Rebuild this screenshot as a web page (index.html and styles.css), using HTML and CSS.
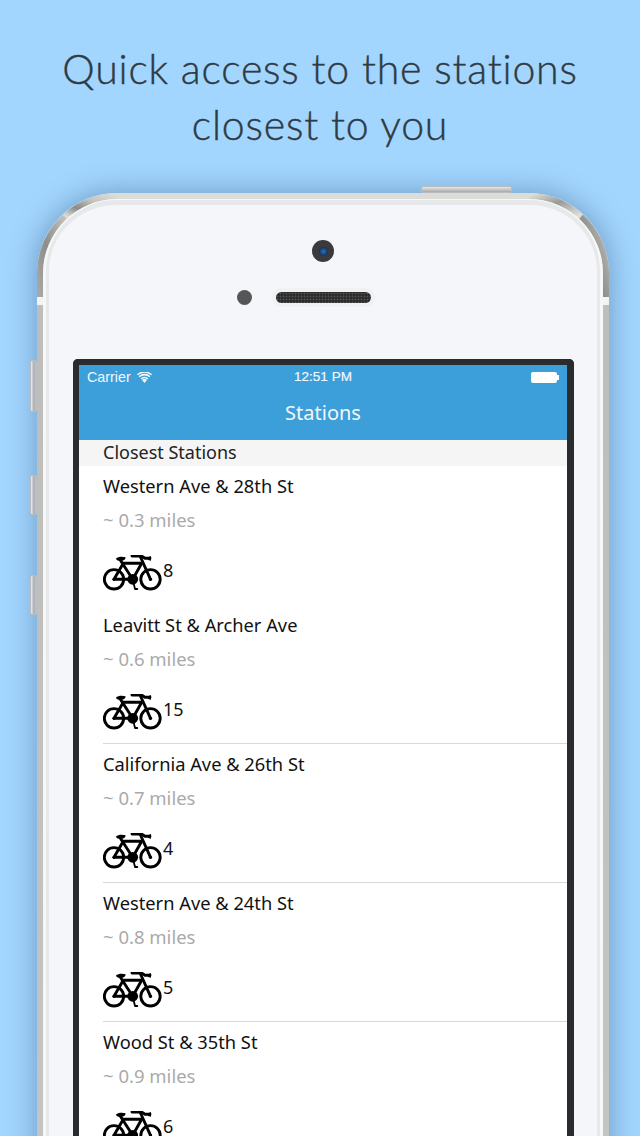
FILE: index.html
```html
<!DOCTYPE html>
<html lang="en">
<head>
<meta charset="utf-8">
<title>Stations</title>
<link rel="stylesheet" href="styles.css">
</head>
<body>
<main class="page">
  <h1 class="headline">Quick access to the stations<br>closest to you</h1>
  <div class="phone">
    <span class="btn btn-top"></span>
    <span class="btn btn-mute"></span>
    <span class="btn btn-up"></span>
    <span class="btn btn-down"></span>
    <svg class="corners" width="572" height="120" viewBox="0 0 572 120">
      <defs>
        <linearGradient id="gl" x1="0" y1="1" x2="1" y2="0"><stop offset="0" stop-color="#a8a8a6"/><stop offset=".45" stop-color="#8d8d8b"/><stop offset="1" stop-color="#c2c2bf"/></linearGradient>
        <linearGradient id="gt" x1="0" y1="1" x2="1" y2="0"><stop offset="0" stop-color="#dcdcda"/><stop offset=".3" stop-color="#8a8a88"/><stop offset=".65" stop-color="#c4c4c1"/><stop offset="1" stop-color="#dcdcd8"/></linearGradient>
        <linearGradient id="gr" x1="1" y1="1" x2="0" y2="0"><stop offset="0" stop-color="#e2e2df"/><stop offset=".55" stop-color="#9a9a97"/><stop offset="1" stop-color="#dcdcd8"/></linearGradient>
      </defs>
      <path class="arc" stroke="url(#gl)" d="M3 104 V80 A77 77 0 0 1 28 24"/>
      <path class="arc" stroke="url(#gt)" d="M29 23 A77 77 0 0 1 80 3"/>
      <path class="arc" stroke="url(#gl)" d="M569 104 V80 A77 77 0 0 0 544 24"/>
      <path class="arc" stroke="url(#gr)" d="M543 23 A77 77 0 0 0 492 3"/>
    </svg>
    <span class="notch notch-l"></span>
    <span class="notch notch-r"></span>
    <div class="lip">
      <div class="face">
        <div class="camera"><span class="lens"></span></div>
        <div class="ear">
          <span class="mic"></span>
          <span class="speaker"></span>
        </div>
        <div class="screen">
          <div class="status">
            <span class="carrier">Carrier
              <svg class="wifi" width="15" height="11" viewBox="0 0 15 11"><path d="M7.5 11 5 8a3.5 3.5 0 0 1 5 0Z"/><path d="M3.6 6.4a5.7 5.7 0 0 1 7.8 0l-1 1.1a4.3 4.3 0 0 0-5.8 0Z"/><path d="M1.6 4.2a8.6 8.6 0 0 1 11.8 0l-1 1.1a7.2 7.2 0 0 0-9.8 0Z"/><path d="M0 2.3a11 11 0 0 1 15 0l-.9 1a9.8 9.8 0 0 0-13.2 0Z"/></svg>
            </span>
            <span class="time">12:51 PM</span>
            <span class="battery"><span class="cell"></span><span class="tip"></span></span>
          </div>
          <div class="navbar">Stations</div>
          <div class="section">Closest Stations</div>
          <ul class="list">
            <li class="row">
              <div class="name">Western Ave &amp; 28th St</div>
              <div class="dist">~ 0.3 miles</div>
              <div class="bikes"><svg class="bike" viewBox="0 0 60 37"><use href="#bike"/></svg><span class="count">8</span></div>
            </li>
            <li class="row">
              <div class="name">Leavitt St &amp; Archer Ave</div>
              <div class="dist">~ 0.6 miles</div>
              <div class="bikes"><svg class="bike" viewBox="0 0 60 37"><use href="#bike"/></svg><span class="count">15</span></div>
            </li>
            <li class="row">
              <div class="name">California Ave &amp; 26th St</div>
              <div class="dist">~ 0.7 miles</div>
              <div class="bikes"><svg class="bike" viewBox="0 0 60 37"><use href="#bike"/></svg><span class="count">4</span></div>
            </li>
            <li class="row">
              <div class="name">Western Ave &amp; 24th St</div>
              <div class="dist">~ 0.8 miles</div>
              <div class="bikes"><svg class="bike" viewBox="0 0 60 37"><use href="#bike"/></svg><span class="count">5</span></div>
            </li>
            <li class="row">
              <div class="name">Wood St &amp; 35th St</div>
              <div class="dist">~ 0.9 miles</div>
              <div class="bikes"><svg class="bike" viewBox="0 0 60 37"><use href="#bike"/></svg><span class="count">6</span></div>
            </li>
          </ul>
        </div>
      </div>
    </div>
  </div>
</main>
<svg class="defs" width="0" height="0">
  <symbol id="bike" viewBox="0 0 60 37">
    <g fill="none" stroke="#000" stroke-width="2.9" stroke-linecap="round" stroke-linejoin="round">
      <circle cx="11" cy="24.3" r="9.7"/>
      <circle cx="47.5" cy="24.3" r="9.7"/>
      <path d="M11 24.3 20.3 8.3 H38.7 L29.7 24.3 Z"/>
      <path d="M17.7 5.7 29.7 24.3"/>
      <path d="M47.5 24.3 37.5 2"/>
      <path d="M29 1 H38.5 L42 3.3 H47"/>
      <path d="M29.7 24.3 32 34 H34.3" stroke-width="1.8"/>
    </g>
    <path d="M13 3.5 C15 1.2 20 1.4 22.5 2.2 C23 4.5 20 5.9 17 5.9 C15 5.9 13 5 13 3.5Z"/>
    <path d="M45 2.2 48 .9 48 5.8 45 5Z"/>
    <circle cx="29.7" cy="24.3" r="5.4"/>
    <circle cx="11" cy="24.3" r="1.6"/>
    <circle cx="47.5" cy="24.3" r="1.6"/>
  </symbol>
</svg>
</body>
</html>
```
FILE: styles.css
```css
* { box-sizing: border-box; }
html, body { margin: 0; padding: 0; }
body {
  width: 640px;
  height: 1136px;
  overflow: hidden;
  background: #a3d6ff;
}
.defs { display: block; }
.page {
  display: flex;
  flex-direction: column;
  height: 1136px;
  overflow: hidden;
}
.headline {
  margin: 41px 0 0;
  height: 113px;
  font: 300 41px/56px Lato, "Open Sans", sans-serif;
  font-variant-ligatures: none;
  letter-spacing: .8px;
  -webkit-text-stroke: .4px #2f3a42;
  color: #2f3a42;
  text-align: center;
  flex: none;
}
.phone {
  position: relative;
  flex: none;
  width: 572px;
  height: 1000px;
  margin: 39px 0 0 37px;
  padding: 6px;
  border-radius: 80px 80px 0 0;
  background: linear-gradient(180deg, #dcdcd8 0, #dcdcd8 6px, #bdbdbb 120px, #c4c4c2 100%);
  box-shadow: 0 0 28px 2px rgba(50, 90, 130, .45);
}
.corners {
  position: absolute;
  left: 0;
  top: 0;
}
.arc { fill: none; stroke-width: 6; }
.notch {
  position: absolute;
  top: 104px;
  width: 7px;
  height: 8px;
  background: #f4f4f4;
}
.notch-l { left: 0; }
.notch-r { right: 0; }
.btn {
  position: absolute;
  background: linear-gradient(90deg, #eceef0, #a9acae 60%, #c7c7c7);
  border: 1px solid #b9bcc0;
  border-radius: 2px;
}
.btn-top { left: 384px; top: -7px; width: 91px; height: 7px; background: linear-gradient(180deg, #e6e6e6, #a9a9a9); }
.btn-mute { left: -7px; top: 167px; width: 7px; height: 52px; }
.btn-up { left: -7px; top: 282px; width: 7px; height: 40px; }
.btn-down { left: -7px; top: 382px; width: 7px; height: 40px; }
.lip {
  position: relative;
  height: 100%;
  padding: 1px 3px 0;
  border-radius: 74px 74px 0 0;
  background: #f7f7f7;
}
.face {
  display: flex;
  flex-direction: column;
  height: 100%;
  padding-top: 5px;
  border: solid #e7e8ea;
  border-width: 5px 3px 0;
  border-radius: 71px 71px 0 0;
  background: #f5f6f9;
}
.camera {
  align-self: center;
  display: flex;
  align-items: center;
  justify-content: center;
  width: 22px;
  height: 22px;
  margin-top: 30px;
  border-radius: 50%;
  background: #3a3a3c;
}
.lens {
  width: 9px;
  height: 9px;
  border-radius: 50%;
  background: radial-gradient(circle, #2f6fb8 0, #12335e 70%);
}
.ear {
  display: grid;
  grid-template-columns: 1fr 95px 1fr;
  align-items: center;
  height: 16px;
  margin-top: 27px;
}
.mic {
  justify-self: end;
  width: 15px;
  height: 15px;
  margin-right: 24px;
  border-radius: 50%;
  background: #555658;
}
.speaker {
  height: 11px;
  border-radius: 6px;
  background: #38393a radial-gradient(circle, #555 0, #2a2a2a 70%) 0 0 / 3px 3px;
  box-shadow: 0 0 0 4px #f0f1f3;
}
.screen {
  flex: none;
  width: 501px;
  height: 800px;
  margin: 54px 0 0 24px;
  overflow: hidden;
  border: solid #2a2b2c;
  border-width: 6px 7px 0 6px;
  border-radius: 5px 5px 0 0;
  background: #fff;
}
.status {
  display: grid;
  grid-template-columns: 1fr auto 1fr;
  align-items: center;
  height: 24px;
  padding: 0 8px;
  background: #3c9fda;
  color: #f2f8fc;
  font: 13.5px/24px "Liberation Sans", Arial, sans-serif;
}
.carrier { display: flex; align-items: center; gap: 6px; font-size: 14.3px; }
.wifi { fill: #f2f8fc; }
.time { font-weight: 400; -webkit-text-stroke: .2px #f2f8fc; }
.battery { justify-self: end; display: flex; align-items: center; }
.cell { width: 26px; height: 11px; border-radius: 2px; background: #fff; }
.tip { width: 2px; height: 5px; background: #fff; }
.navbar {
  height: 51px;
  background: #3c9fda;
  color: #f2f8fc;
  font: 20px/47px "Noto Sans", sans-serif;
  text-align: center;
}
.section {
  height: 26px;
  padding-left: 24px;
  background: #f5f5f5;
  color: #222;
  font: 18px/25px "Noto Sans", sans-serif;
}
.list { margin: 0; padding: 0; list-style: none; }
.row {
  height: 139px;
  margin-left: 24px;
  padding-bottom: 14px;
  border-bottom: 1px solid #d9d9d9;
  font-family: "Noto Sans", sans-serif;
}
.row:first-child { border-bottom-color: transparent; }
.name { height: 40px; font-size: 18.3px; line-height: 39px; color: #111; }
.dist { height: 28px; font-size: 18.5px; line-height: 27px; color: #aaa; }
.bikes { display: flex; align-items: flex-start; gap: 0; margin-top: 21px; }
.bike { width: 60px; height: 37px; }
.count { font-size: 18px; line-height: 30px; color: #111; }
```
